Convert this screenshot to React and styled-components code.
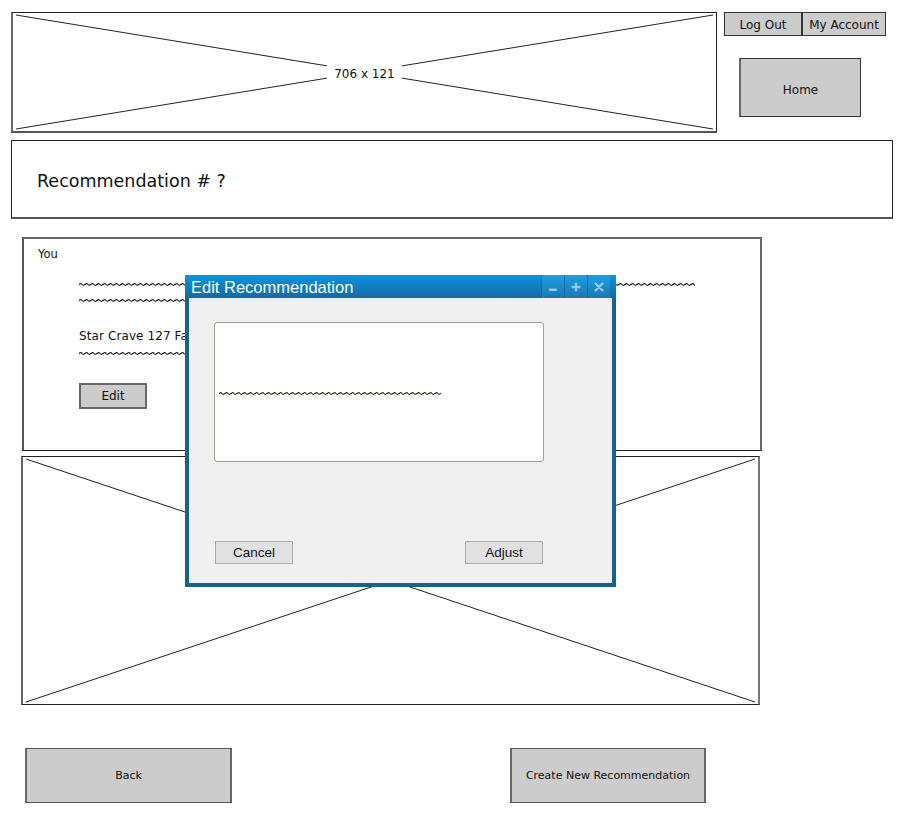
import styled, { createGlobalStyle } from "styled-components";

const GlobalStyle = createGlobalStyle`
  body {
    margin: 0;
    background: #fff;
    font-family: "DejaVu Sans", sans-serif;
    color: #111;
  }
`;

const Squiggle = ({ width, color = "#222", id }) => (
  <svg width={width} height="5" style={{ display: "block" }}>
    <defs>
      <pattern id={id} width="6" height="5" patternUnits="userSpaceOnUse">
        <path d="M0 3 Q1.5 0.6 3 2.5 T6 2" fill="none" stroke={color} strokeWidth="1.2" />
      </pattern>
    </defs>
    <rect width={width} height="5" fill={`url(#${id})`} />
  </svg>
);

const Placeholder = ({ w, h, label }) => (
  <>
    <svg width={w} height={h} style={{ position: "absolute", inset: 0 }}>
      <line x1="3" y1="2" x2={w - 3} y2={h - 2} stroke="#222" strokeWidth="1" />
      <line x1="3" y1={h - 2} x2={w - 3} y2="2" stroke="#222" strokeWidth="1" />
    </svg>
    {label && <PhLabel>{label}</PhLabel>}
  </>
);

const App = () => {
  return (
    <>
      <GlobalStyle />
      <Page>
        <TopRow>
          <Banner>
            <Placeholder w={703} h={118} label="706 x 121" />
          </Banner>
          <SideCol>
            <LinkRow>
              <SmallBtn $w={78}>Log Out</SmallBtn>
              <SmallBtn $w={84}>My Account</SmallBtn>
            </LinkRow>
            <HomeBtn>Home</HomeBtn>
          </SideCol>
        </TopRow>

        <TitleBox>Recommendation # ?</TitleBox>

        <Card>
          <Who>You</Who>
          <CardBody>
            <Squiggle width={616} id="sq1" />
            <Gap $h={11} />
            <Squiggle width={500} id="sq2" />
            <StarText>Star Crave 127 Fast Burn</StarText>
            <Squiggle width={420} id="sq3" />
            <EditBtn>Edit</EditBtn>
          </CardBody>
        </Card>

        <Picture>
          <Placeholder w={735} h={247} />
        </Picture>

        <BottomRow>
          <BigBtn $w={207}>Back</BigBtn>
          <BigBtn $w={196}>Create New Recommendation</BigBtn>
        </BottomRow>

        <Modal>
          <TitleBar>
            <TitleText>Edit Recommendation</TitleText>
            <WinBtns>
              <WinBtn>
                <svg width="10" height="10" viewBox="0 0 10 10">
                  <rect x="1" y="6.5" width="8" height="2.4" rx="1" fill="#8ccbf0" />
                </svg>
              </WinBtn>
              <WinBtn>
                <svg width="10" height="10" viewBox="0 0 10 10">
                  <rect x="0.5" y="3.8" width="9" height="2.4" rx="1" fill="#8ccbf0" />
                  <rect x="3.8" y="0.5" width="2.4" height="9" rx="1" fill="#8ccbf0" />
                </svg>
              </WinBtn>
              <WinBtn>
                <svg width="10" height="10" viewBox="0 0 10 10">
                  <path d="M1.5 1.5 L8.5 8.5 M8.5 1.5 L1.5 8.5" stroke="#8ccbf0" strokeWidth="2.4" strokeLinecap="round" />
                </svg>
              </WinBtn>
            </WinBtns>
          </TitleBar>
          <ModalBody>
            <TextArea>
              <Squiggle width={222} color="#3a3020" id="sq4" />
            </TextArea>
            <DialogRow>
              <DialogBtn>Cancel</DialogBtn>
              <DialogBtn>Adjust</DialogBtn>
            </DialogRow>
          </ModalBody>
        </Modal>
      </Page>
    </>
  );
};

export default App;

const Page = styled.div`
  position: relative;
  width: 897px;
  min-height: 836px;
  padding: 12px 0 0 11px;
  box-sizing: border-box;
`;

const TopRow = styled.div`
  display: flex;
  gap: 7px;
`;

const Banner = styled.div`
  position: relative;
  width: 706px;
  height: 121px;
  box-sizing: border-box;
  border: 1px solid #222;
  border-left: 2px solid #666;
  border-bottom: 2px solid #555;
  display: flex;
  align-items: center;
  justify-content: center;
`;

const PhLabel = styled.span`
  position: relative;
  background: #fff;
  padding: 2px 7px;
  margin-top: 3px;
  font-size: 12px;
  font-family: "DejaVu Sans", sans-serif;
`;

const SideCol = styled.div`
  display: flex;
  flex-direction: column;
`;

const LinkRow = styled.div`
  display: flex;
`;

const SmallBtn = styled.div`
  width: ${(p) => p.$w}px;
  height: 24px;
  box-sizing: border-box;
  background: #cccccc;
  border: 1px solid #333;
  padding-top: 2px;
  font-size: 12px;
  display: flex;
  align-items: center;
  justify-content: center;
`;

const HomeBtn = styled.div`
  width: 122px;
  height: 59px;
  margin: 22px 0 0 15px;
  box-sizing: border-box;
  background: #cccccc;
  border: 1px solid #333;
  border-left: 2px solid #666;
  padding-top: 4px;
  font-size: 12px;
  display: flex;
  align-items: center;
  justify-content: center;
`;

const TitleBox = styled.div`
  margin-top: 7px;
  width: 882px;
  height: 79px;
  box-sizing: border-box;
  border: 1px solid #222;
  border-bottom: 2px solid #555;
  padding: 4px 0 0 25px;
  display: flex;
  align-items: center;
  font-size: 17.5px;
`;

const Card = styled.div`
  margin: 18px 0 0 11px;
  width: 740px;
  height: 214px;
  box-sizing: border-box;
  border: 1px solid #222;
  border-top: 2px solid #666;
  border-left: 2px solid #555;
  border-right: 2px solid #666;
  padding: 8px 0 0 14px;
`;

const Who = styled.div`
  font-size: 11.5px;
`;

const CardBody = styled.div`
  margin: 21px 0 0 41px;
`;

const Gap = styled.div`
  height: ${(p) => p.$h}px;
`;

const StarText = styled.div`
  margin: 26px 0 8px;
  font-size: 12px;
  letter-spacing: 0.1px;
`;

const EditBtn = styled.div`
  margin-top: 27px;
  width: 68px;
  height: 26px;
  box-sizing: border-box;
  background: #cccccc;
  border: 2px solid #666;
  font-size: 12px;
  display: flex;
  align-items: center;
  justify-content: center;
`;

const Picture = styled.div`
  position: relative;
  margin: 5px 0 0 10px;
  width: 739px;
  height: 249px;
  box-sizing: border-box;
  border: 1px solid #222;
  border-left: 2px solid #666;
  border-right: 2px solid #777;
`;

const BottomRow = styled.div`
  display: flex;
  gap: 278px;
  margin: 43px 0 0 14px;
`;

const BigBtn = styled.div`
  width: ${(p) => p.$w}px;
  height: 55px;
  box-sizing: border-box;
  background: #cccccc;
  border: 1px solid #555;
  border-left: 2px solid #666;
  border-right: 2px solid #666;
  font-size: 11px;
  display: flex;
  align-items: center;
  justify-content: center;
`;

const Modal = styled.div`
  position: absolute;
  left: 185px;
  top: 275px;
  width: 431px;
  height: 312px;
  box-sizing: border-box;
  background: #17628b;
  padding: 0 4px 4px 4px;
  display: flex;
  flex-direction: column;
  font-family: "Liberation Sans", Arial, sans-serif;
`;

const TitleBar = styled.div`
  height: 23px;
  margin: 0 -4px;
  padding: 0 6px 0 6px;
  background: linear-gradient(to bottom, #0a94e0, #1669a0);
  display: flex;
  align-items: center;
  justify-content: space-between;
`;

const TitleText = styled.div`
  color: #fff;
  font-size: 16.5px;
  margin-top: 1px;
`;

const WinBtns = styled.div`
  display: flex;
  align-self: stretch;
`;

const WinBtn = styled.div`
  width: 23px;
  box-sizing: border-box;
  background: linear-gradient(to bottom, #1d9fe3, #1a78b0);
  border-left: 1px solid #116aa0;
  display: flex;
  align-items: center;
  justify-content: center;
`;

const ModalBody = styled.div`
  flex: 1;
  background: #f0f0f0;
  padding: 24px 0 0 25px;
`;

const TextArea = styled.div`
  width: 330px;
  height: 140px;
  box-sizing: border-box;
  background: #fff;
  border: 1px solid #a39c90;
  border-radius: 3px;
  padding: 2px 0 0 4px;
  display: flex;
  align-items: center;
`;

const DialogRow = styled.div`
  display: flex;
  justify-content: space-between;
  width: 328px;
  margin: 79px 0 0 1px;
`;

const DialogBtn = styled.div`
  width: 78px;
  height: 23px;
  box-sizing: border-box;
  background: #e1e1e1;
  border: 1px solid #adadad;
  font-size: 13.5px;
  display: flex;
  align-items: center;
  justify-content: center;
`;
